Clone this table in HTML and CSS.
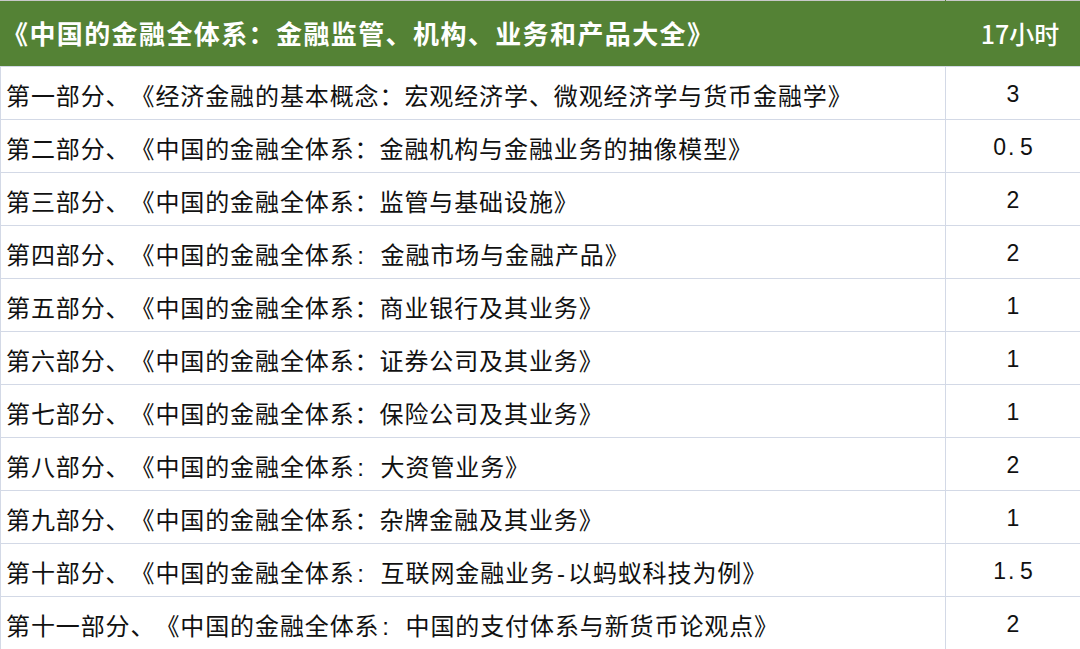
FILE: index.html
```html
<!DOCTYPE html>
<html lang="zh-CN">
<head>
<meta charset="utf-8">
<title>中国的金融全体系</title>
<link rel="stylesheet" href="styles.css">
</head>
<body>
<table class="course">
  <colgroup><col class="c-title"><col class="c-hours"></colgroup>
  <thead>
    <tr class="head">
      <th class="title">《中国的金融全体系：金融监管、机构、业务和产品大全》</th>
      <th class="hours">17小时</th>
    </tr>
  </thead>
  <tbody>
    <tr><td class="title">第一部分、《经济金融的基本概念：宏观经济学、微观经济学与货币金融学》</td><td class="hours">3</td></tr>
    <tr><td class="title">第二部分、《中国的金融全体系：金融机构与金融业务的抽像模型》</td><td class="hours">0<span class="hw">.</span>5</td></tr>
    <tr><td class="title">第三部分、《中国的金融全体系：监管与基础设施》</td><td class="hours">2</td></tr>
    <tr><td class="title">第四部分、《中国的金融全体系<span class="hw">:</span><span class="hw">&nbsp;</span>金融市场与金融产品》</td><td class="hours">2</td></tr>
    <tr><td class="title">第五部分、《中国的金融全体系：商业银行及其业务》</td><td class="hours">1</td></tr>
    <tr><td class="title">第六部分、《中国的金融全体系：证券公司及其业务》</td><td class="hours">1</td></tr>
    <tr><td class="title">第七部分、《中国的金融全体系：保险公司及其业务》</td><td class="hours">1</td></tr>
    <tr><td class="title">第八部分、《中国的金融全体系<span class="hw">:</span><span class="hw">&nbsp;</span>大资管业务》</td><td class="hours">2</td></tr>
    <tr><td class="title">第九部分、《中国的金融全体系：杂牌金融及其业务》</td><td class="hours">1</td></tr>
    <tr><td class="title">第十部分、《中国的金融全体系<span class="hw">:</span><span class="hw">&nbsp;</span>互联网金融业务<span class="hw">-</span>以蚂蚁科技为例》</td><td class="hours">1<span class="hw">.</span>5</td></tr>
    <tr><td class="title">第十一部分、《中国的金融全体系<span class="hw">:</span><span class="hw">&nbsp;</span>中国的支付体系与新货币论观点》</td><td class="hours">2</td></tr>
  </tbody>
</table>
</body>
</html>
```

FILE: styles.css
```css
html, body {
  margin: 0;
  padding: 0;
  background: #ffffff;
}

body {
  font-family: "Noto Sans CJK SC", "Noto Sans", sans-serif;
  color: #111111;
  text-spacing-trim: space-all;
}

.course {
  width: 1080px;
  border-collapse: collapse;
  table-layout: fixed;
}

.c-title { width: 945px; }
.c-hours { width: 135px; }

.course th,
.course td {
  border: 1px solid #d3d9e6;
  padding: 0 0 0 5px;
  white-space: nowrap;
  overflow: hidden;
}

.head {
  height: 66px;
  background: #548235;
  color: #ffffff;
}

.head th {
  border-color: #548235;
  border-top-color: #c8c8c8;
  border-bottom-color: #d3d9e6;
}

.head .title {
  text-align: left;
  font-size: 26px;
  font-weight: 700;
  letter-spacing: 1.4px;
  padding-left: 1px;
  padding-bottom: 2px;
}

.head .hours {
  text-align: center;
  font-size: 25px;
  font-weight: 500;
  padding-left: 14px;
  padding-bottom: 2px;
}

tbody tr {
  height: 53px;
}

tbody .title {
  font-size: 24px;
  letter-spacing: 0.9px;
  text-align: left;
  padding-top: 3px;
}

tbody .hours {
  text-align: center;
  padding-left: 0;
  padding-top: 3px;
  font-family: "Liberation Sans", Arial, sans-serif;
  font-size: 23px;
  color: #111111;
}

.hw {
  display: inline-block;
  width: 12px;
  text-align: center;
  letter-spacing: 0;
  font-family: "Liberation Sans", Arial, sans-serif;
}

.title .hw {
  margin-right: 1px;
}

.hours .hw {
  text-align: left;
  padding-left: 2px;
}
```
